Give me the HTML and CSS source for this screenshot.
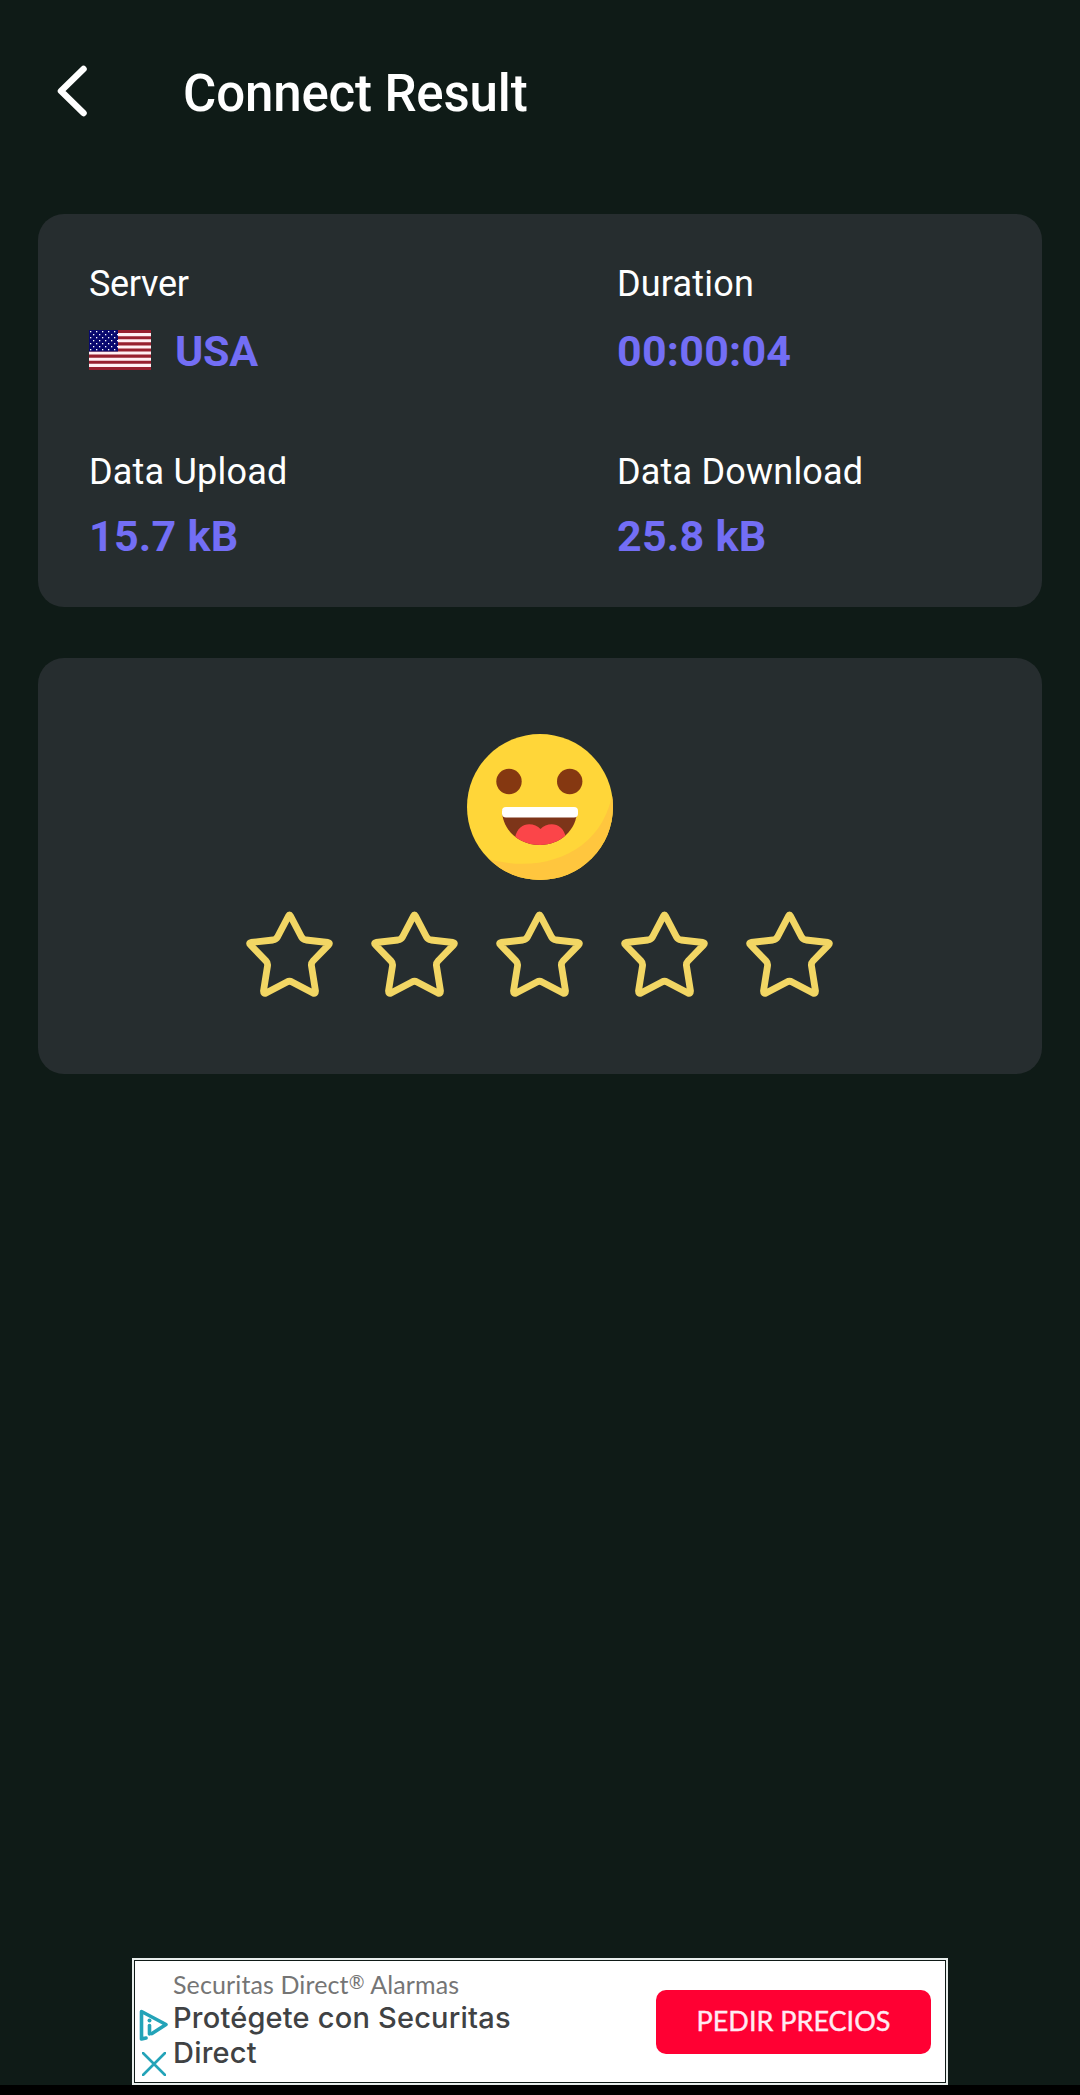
FILE: index.html
```html
<!DOCTYPE html>
<html lang="en">

<head>
    <meta charset="UTF-8">
    <meta name="viewport" content="width=device-width, initial-scale=1.0">
    <title>Connect Result</title>

    <link rel="stylesheet" href="styles.css">
</head>

<body>
    <!-- star outline shared by the rating row -->
    <svg class="defs" width="0" height="0">
        <symbol id="star" viewBox="0 0 87 87">
            <path d="M42.5 5 Q43.5 3 44.5 5 L55.5 26 Q57 28.5 60 29 L82 31.5 Q84.5 32 82.5 34 L67 50 Q65 52 65.5 55 L69.5 80 Q69.5 83 67 82 L46 71 Q43.5 69.5 41 71 L20 82 Q17.5 83 17.5 80 L21.5 55 Q22 52 20 50 L4.5 34 Q2.5 32 5 31.5 L27 29 Q30 28.5 31.5 26 Z" />
        </symbol>
    </svg>

    <header class="header">
        <button class="back" aria-label="Back">
            <svg width="30" height="52" viewBox="0 0 30 52">
                <path d="M26.5 4 L4 26 L26.5 48" />
            </svg>
        </button>
        <h1>Connect Result</h1>
    </header>

    <main>
        <section class="card stats">
            <div class="stat">
                <div class="label server">Server</div>
                <div class="value">
                    <svg class="flag" width="62" height="40" viewBox="0 0 62 40">
                        <defs>
                            <pattern id="stars" width="6" height="6" patternUnits="userSpaceOnUse">
                                <rect x="1" y="1" width="1.3" height="1.3" fill="#fff" />
                                <rect x="4" y="4" width="1.3" height="1.3" fill="#fff" />
                            </pattern>
                        </defs>
                        <rect width="62" height="40" fill="#fff0f4" />
                        <path d="M0 1.54H62M0 7.7H62M0 13.85H62M0 20H62M0 26.15H62M0 32.3H62M0 38.46H62" stroke="#97202f" stroke-width="3.08" />
                        <rect width="29" height="21.5" fill="#08086e" />
                        <rect width="29" height="21" fill="url(#stars)" />
                    </svg>
                    <span class="usa">USA</span>
                </div>
            </div>
            <div class="stat">
                <div class="label">Duration</div>
                <div class="value">00:00:04</div>
            </div>
            <div class="stat">
                <div class="label">Data Upload</div>
                <div class="value">15.7 kB</div>
            </div>
            <div class="stat">
                <div class="label">Data Download</div>
                <div class="value">25.8 kB</div>
            </div>
        </section>

        <section class="card rating">
            <svg class="emoji" width="146" height="146" viewBox="0 0 146 146">
                <defs>
                    <clipPath id="face">
                        <circle cx="73" cy="73" r="73" />
                    </clipPath>
                    <clipPath id="mouth">
                        <path d="M35 76 H110 C110 96 93 111 73 111 C52 111 35 96 35 76 Z" />
                    </clipPath>
                </defs>
                <g clip-path="url(#face)">
                    <rect width="146" height="146" fill="#ffd639" />
                    <path d="M146 56 C137 118 76 142 18 124 V146 H146 Z" fill="#ffc63e" />
                </g>
                <circle cx="42" cy="47.5" r="12.7" fill="#853811" />
                <circle cx="102.7" cy="47.5" r="12.7" fill="#853811" />
                <g clip-path="url(#mouth)">
                    <rect x="30" y="76" width="90" height="40" fill="#7d3519" />
                    <path d="M48 104 C51 87 67 88 73.5 95 C80 88 96 87 99 104 V114 H48 Z" fill="#fb4549" />
                </g>
                <rect x="35" y="73" width="76" height="10.5" rx="4" fill="#fff" />
            </svg>
            <div class="star-row">
                <svg class="star"><use href="#star" /></svg>
                <svg class="star"><use href="#star" /></svg>
                <svg class="star"><use href="#star" /></svg>
                <svg class="star"><use href="#star" /></svg>
                <svg class="star"><use href="#star" /></svg>
            </div>
        </section>
    </main>

    <footer class="ad-bar">
        <div class="ad">
            <div class="ad-icons">
                <svg width="30" height="32" viewBox="0 0 30 32">
                    <path d="M7 29 L2.5 30 V2.5 L27 15.5 L13 24.5" />
                    <path d="M10.5 16.5 V25" />
                    <circle class="dot" cx="10.5" cy="11.5" r="2" />
                </svg>
                <svg class="close" width="24" height="24" viewBox="0 0 24 24">
                    <path d="M1 1 L23 23 M23 1 L1 23" />
                </svg>
            </div>
            <div class="ad-text">
                <div class="ad-brand">Securitas Direct<sup>®</sup> Alarmas</div>
                <div class="ad-title">Protégete con Securitas<br>Direct</div>
            </div>
            <button class="ad-button">PEDIR PRECIOS</button>
        </div>
    </footer>
</body>

</html>
```

FILE: styles.css
```css
* {
    box-sizing: border-box;
}

body {
    font-family: Roboto, sans-serif;
    background-color: #0f1b17;
    color: #fff;
    margin: 0;
    height: 2095px;
    display: flex;
    flex-direction: column;
    overflow: hidden;
}

.defs {
    display: block;
    flex: none;
}

button {
    border: none;
    padding: 0;
    cursor: pointer;
}

.header {
    display: flex;
    align-items: center;
    height: 214px;
    padding: 0 57px 26px;
}

.back {
    display: flex;
    background: none;
    margin: -6px 96px 0 0;
}

.back path {
    fill: none;
    stroke: #fff;
    stroke-width: 6.5;
    stroke-linecap: round;
    stroke-linejoin: round;
}

h1 {
    font-size: 51px;
    font-weight: 500;
    line-height: 60px;
    letter-spacing: -0.15px;
    margin: 0;
}

main {
    display: flex;
    flex-direction: column;
    gap: 51px;
    padding: 0 38px;
}

.card {
    background-color: #262d2f;
    border-radius: 26px;
}

.stats {
    display: grid;
    grid-template-columns: 528px 1fr;
    grid-template-rows: 188px auto;
    height: 393px;
    padding: 50px 51px 0;
}

.label {
    font-size: 36px;
    line-height: 40px;
    letter-spacing: 0.2px;
}

.label.server {
    letter-spacing: -0.3px;
}

.value {
    display: flex;
    align-items: center;
    color: #736ef5;
    font-size: 43px;
    font-weight: 700;
    line-height: 50px;
    letter-spacing: 0.25px;
    margin-top: 19px;
}

.stat:nth-child(-n+2) .value {
    margin-top: 22px;
}

.flag {
    margin: 0 24px 2px 0;
}

.usa {
    letter-spacing: -0.3px;
}

.rating {
    display: flex;
    flex-direction: column;
    align-items: center;
    height: 416px;
    padding-top: 76px;
}

.star-row {
    display: flex;
    gap: 38px;
    margin: 31px 1px 0 0;
}

.star {
    width: 87px;
    height: 87px;
    fill: none;
    stroke: #f2d664;
    stroke-width: 6.8;
    stroke-linejoin: round;
}

.ad-bar {
    margin-top: auto;
    height: 137px;
    border-bottom: 10px solid #000;
    display: flex;
    justify-content: center;
}

.ad {
    display: flex;
    width: 816px;
    height: 127px;
    background-color: #fff;
    border: 2px solid #e8eeec;
    outline: 1px solid #0f1a17;
    outline-offset: -3px;
    font-family: Inter, sans-serif;
}

.ad-icons {
    width: 39px;
    padding: 49px 0 0 5px;
}

.ad-icons svg {
    display: block;
    fill: none;
    stroke: #23a3b8;
    stroke-width: 3.6;
    stroke-linejoin: round;
    stroke-linecap: round;
}

.ad-icons .dot {
    fill: #23a3b8;
    stroke: none;
}

.ad-icons .close {
    margin: 11px 0 0 3px;
    stroke-width: 2.6;
}

.ad-text {
    flex: 1;
    padding-top: 8px;
}

.ad-brand {
    color: #757575;
    font-family: Lato, sans-serif;
    font-size: 25px;
    line-height: 32px;
    letter-spacing: 0.12px;
}

.ad-brand sup {
    font-size: 19px;
    line-height: 0;
    vertical-align: 5px;
}

.ad-title {
    color: #404244;
    font-size: 29px;
    font-weight: 500;
    line-height: 35px;
    letter-spacing: 0.2px;
}

.ad-button {
    width: 275px;
    height: 64px;
    margin: 30px 15px 0 0;
    padding-bottom: 4px;
    border-radius: 10px;
    background-color: #ff0033;
    color: #ffeaf2;
    font-family: Lato, sans-serif;
    font-size: 27px;
    -webkit-text-stroke: 0.4px #ffeaf2;
}
```
